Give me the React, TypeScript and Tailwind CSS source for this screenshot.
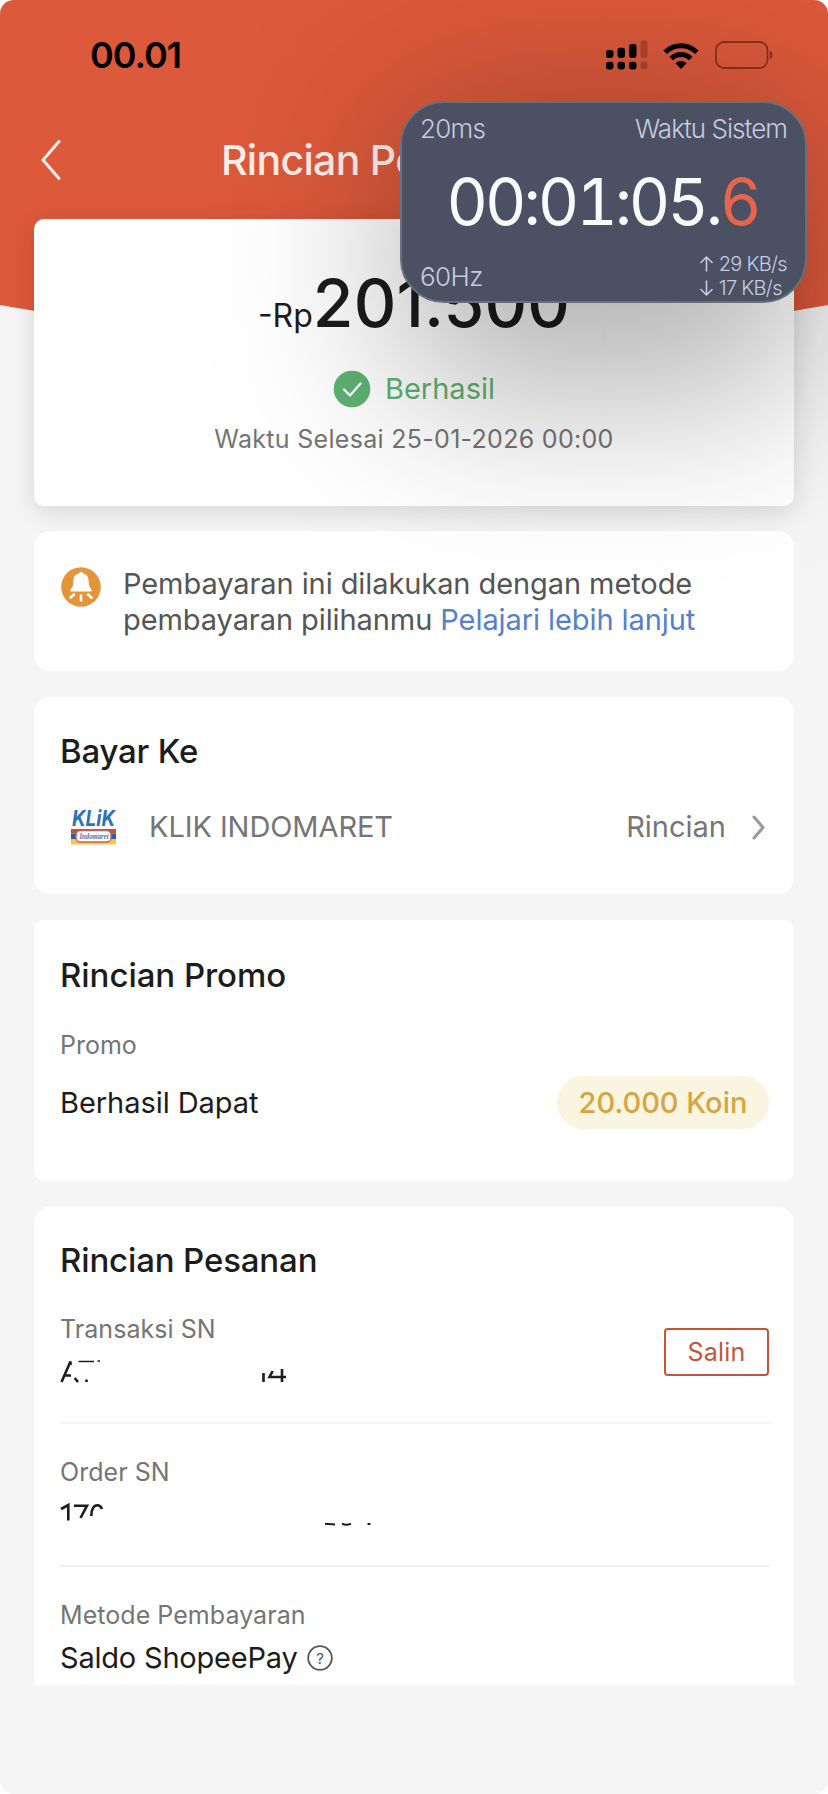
import React from "react";

function StatusIcons() {
  return (
    <div className="flex items-center">
      <svg width="42" height="30" viewBox="0 0 42 30">
        <g fill="#000">
          <rect x="0" y="10" width="7.5" height="8" rx="2.4" />
          <rect x="11.5" y="7.700" width="7.500" height="10.300" rx="2.4" />
          <rect x="23" y="4" width="7.500" height="14" rx="2.4" />
          <rect x="0" y="21.700" width="7.500" height="7.800" rx="2.4" />
          <rect x="11.5" y="21.700" width="7.500" height="7.800" rx="2.4" />
          <rect x="23" y="21.700" width="7.500" height="7.800" rx="2.4" />
        </g>
        <g fill="#000" opacity="0.2">
          <rect x="34.5" y="0.500" width="7" height="17.500" rx="2.4" />
          <rect x="34.5" y="21.700" width="7" height="7.800" rx="2.4" />
        </g>
      </svg>
      <svg width="36" height="27" viewBox="0 0 36 27" className="ml-[15px]">
        <g fill="none" stroke="#000" strokeWidth="5">
          <path d="M2.2 10.2a22.4 22.4 0 0 1 31.6 0" />
          <path d="M8.2 16.6a13.8 13.8 0 0 1 19.6 0" />
        </g>
        <path d="M18 27l-5.6-5.8a8 8 0 0 1 11.2 0z" fill="#000" />
      </svg>
      <svg width="58" height="28" viewBox="0 0 58 28" className="ml-[16px]">
        <rect x="1" y="1" width="51.500" height="26" rx="8" fill="none" stroke="#8f3118" strokeWidth="1.8" />
        <path d="M54.8 9.5c3.400 1.400 3.400 7.600 0 9z" fill="#8f3118" />
      </svg>
    </div>
  );
}

function Arrow({ up }: { up?: boolean }) {
  return (
    <svg width="13" height="16" viewBox="0 0 13 16" className="mr-[6px]" fill="none" stroke="currentColor" strokeWidth="1.600" strokeLinecap="round" strokeLinejoin="round">
      {up ? <path d="M6.500 15V1M1 6.500L6.500 1L12 6.500" /> : <path d="M6.500 1v14M1 9.500L6.500 15L12 9.500" />}
    </svg>
  );
}

function SystemClock() {
  return (
    <>
      <div className="absolute left-[400px] top-[115px] h-[280px] w-[407px] rounded-[42px] bg-black/30 blur-[88px]" />
      <div className="absolute left-[400px] top-[101px] flex h-[202px] w-[407px] flex-col justify-between rounded-[44px] border-2 border-[#66707c] bg-[#4b5163] font-light text-[#c5cbe0]">
        <div className="flex justify-between px-[18px] pt-[9px] text-[26px] leading-[34px]">
          <span className="tracking-[-0.7px]">20ms</span>
          <span className="tracking-[-0.95px]">Waktu Sistem</span>
        </div>
        <div className="mt-[6px] flex justify-center pr-[2px] text-[64px] font-normal leading-[60px] tracking-[-3px] text-[#f7faff] tabular-nums">
          <span>00:01:05.</span>
          <span className="text-[#e8654c]">6</span>
        </div>
        <div className="flex items-end justify-between px-[18px]">
          <span className="pb-[7px] text-[26px] leading-[34px] tracking-[-0.6px]">60Hz</span>
          <div className="flex flex-col pb-[1px] text-[20px] leading-[24px] tracking-[-0.7px]">
            <span className="flex items-center"><Arrow up />29 KB/s</span>
            <span className="flex items-center"><Arrow />17 KB/s</span>
          </div>
        </div>
      </div>
    </>
  );
}

function BellIcon() {
  return (
    <svg width="40" height="40" viewBox="0 0 40 40" className="mt-[1px] shrink-0">
      <circle cx="20" cy="20" r="19.800" fill="#e3953a" />
      <path d="M20 5c1.200 0 2 .6 2.300 1.500c3.600.9 5 3.600 5.300 7l.3 4.200c.2 2.400 1.700 3.300 2.600 5c.4.900 0 1.800-.9 1.800H10.400c-.9 0-1.300-.9-.9-1.800c.9-1.700 2.400-2.600 2.600-5l.3-4.200c.3-3.400 1.700-6.100 5.300-7C18 5.600 18.800 5 20 5z" fill="#fff" />
      <g stroke="#fff" strokeWidth="2.600"><path d="M20 27.500v7M13.700 26.800l-5 4.600M26.300 26.800l5 4.600" /></g>
    </svg>
  );
}

function KlikLogo() {
  return (
    <svg width="46" height="36" viewBox="0 0 46 36" className="overflow-visible">
      <text x="1" y="17" fontSize="21.500" fontWeight="700" fontStyle="italic" textLength="43" lengthAdjust="spacingAndGlyphs" fill="#2c72b4" fontFamily="Inter, sans-serif">KLiK</text>
      <rect y="20" width="45" height="4.500" fill="#d2483f" />
      <rect y="24.500" width="45" height="6" fill="#2c5da6" />
      <rect y="30" width="45" height="5.500" fill="#f3c74f" />
      <rect x="5" y="21.500" width="35" height="11.500" rx="4.500" fill="#fff" stroke="#c9605c" strokeWidth="1.300" />
      <text x="8.500" y="30" fontSize="8" fontWeight="700" fontStyle="italic" textLength="29" lengthAdjust="spacingAndGlyphs" fill="#5a6b9c" fontFamily="Liberation Serif, serif">Indomaret</text>
    </svg>
  );
}

function Field({ label, children }: { label: string; children: React.ReactNode }) {
  return (
    <div className="flex flex-col">
      <span className="text-[25px] leading-[32px] tracking-[0.050px] text-[#757575]">{label}</span>
      <div className="mt-[11px] h-[32px] text-[29px] leading-[32px] tracking-[-0.200px] text-[#1c1c1c]">{children}</div>
    </div>
  );
}

export default function App() {
  return (
    <div className="bg-white font-[Inter,'Noto_Sans',sans-serif]">
      <div className="relative h-[1794px] w-[828px] overflow-hidden rounded-[14px] bg-[#f5f5f5]">
        <svg className="absolute left-0 top-0" width="828" height="330" viewBox="0 0 828 330">
          <path d="M0 0H828V305Q414 380 0 305Z" fill="#dc593b" />
        </svg>
        <div className="relative flex flex-col">
          <header className="flex h-[219px] flex-col">
            <div className="flex h-[110px] items-center justify-between pl-[90px] pr-[55px]">
              <span className="text-[36px] font-semibold tracking-[-1px] text-black">00.01</span>
              <StatusIcons />
            </div>
            <div className="flex h-[100px] items-center pl-[41px]">
              <svg width="20" height="40" viewBox="0 0 20 40" fill="none" stroke="#fdeee9" strokeWidth="3" strokeLinecap="round" strokeLinejoin="round"><path d="M18 1.500L2 20L18 38.500" /></svg>
              <h1 className="ml-[160px] mt-[2px] text-[41px] font-medium tracking-[-0.700px] text-[#fdeee9]">Rincian Pesanan</h1>
            </div>
          </header>

          <main className="flex flex-col px-[34px]">
            <section className="flex h-[287px] flex-col items-center rounded-[10px] bg-white pt-[42px] shadow-[0_6px_26px_rgba(0,0,0,0.12)]">
              <div className="flex items-baseline text-[#1c1c1c]">
                <span className="text-[32px]">-Rp</span>
                <span className="text-[66px] font-medium leading-[84px] tracking-[0.200px]">201.500</span>
              </div>
              <div className="mt-[25px] flex items-center">
                <svg width="38" height="38" viewBox="0 0 38 38"><circle cx="19" cy="19" r="18.300" fill="#5db373" /><path d="M11 19.500l6 6L27.500 13.500" fill="none" stroke="#fff" strokeWidth="2.400" strokeLinecap="round" strokeLinejoin="round" /></svg>
                <span className="ml-[14px] text-[29px] leading-[36px] text-[#5db373]">Berhasil</span>
              </div>
              <span className="mt-[15px] text-[25px] leading-[32px] tracking-[0.300px] text-[#757575]">Waktu Selesai 25-01-2026 00:00</span>
            </section>

            <section className="mt-[25px] flex h-[140px] rounded-[16px] bg-white pl-[27px] pt-[35px]">
              <BellIcon />
              <p className="ml-[22px] whitespace-nowrap text-[29px] leading-[36px] tracking-[-0.080px] text-[#555]">
                Pembayaran ini dilakukan dengan metode<br />
                pembayaran pilihanmu <a className="text-[#5580cc]">Pelajari lebih lanjut</a>
              </p>
            </section>

            <section className="mt-[26px] flex h-[197px] flex-col rounded-[16px] bg-white pl-[26px] pr-[29px] pt-[33px]">
              <h2 className="text-[33px] font-medium leading-[42px] tracking-[-0.200px] text-[#1c1c1c]">Bayar Ke</h2>
              <div className="mt-[33px] flex h-[44px] items-center pl-[11px] text-[29px] text-[#757575]">
                <KlikLogo />
                <span className="ml-[32px] tracking-[-0.080px]">KLIK INDOMARET</span>
                <span className="ml-auto">Rincian</span>
                <svg className="ml-[26px]" width="13" height="25" viewBox="0 0 13 25" fill="none" stroke="#999" strokeWidth="3" strokeLinecap="round" strokeLinejoin="round"><path d="M2 2L11 12.500L2 23" /></svg>
              </div>
            </section>

            <section className="mt-[26px] flex h-[261px] flex-col rounded-[10px] bg-white pl-[26px] pr-[25px] pt-[34px]">
              <h2 className="text-[33px] font-medium leading-[42px] tracking-[-0.050px] text-[#1c1c1c]">Rincian Promo</h2>
              <span className="mt-[33px] text-[25px] leading-[32px] text-[#757575]">Promo</span>
              <div className="mt-[15px] flex h-[53px] items-center justify-between">
                <span className="text-[29px] tracking-[-0.050px] text-[#1c1c1c]">Berhasil Dapat</span>
                <span className="flex h-[53px] w-[212px] items-center justify-center rounded-full bg-[#faf4e1] text-[29px] font-medium text-[#d5a63f]">20.000 Koin</span>
              </div>
            </section>

            <section className="mt-[26px] flex h-[478px] flex-col rounded-t-[16px] bg-white pl-[26px] pr-[24px] pt-[32px]">
              <h2 className="text-[33px] font-medium leading-[42px] tracking-[-0.150px] text-[#1c1c1c]">Rincian Pesanan</h2>
              <div className="mt-[32px] flex h-[111px] justify-between border-b-2 border-[#f5f5f5]">
                <Field label="Transaksi SN">
                  <svg width="228" height="32" viewBox="0 0 228 32" fill="none" stroke="#1c1c1c" strokeWidth="2.600">
                    <path d="M1.500 26L10.500 5.500V9M4 19.500H11M14.700 22L18 26M26.500 23.500V26M203.500 17V26M222 13V26M212.700 15L209.500 21H226" />
                    <path d="M18.500 5.500H34M37.500 5H40" strokeWidth="1.500" />
                  </svg>
                </Field>
                <button className="mr-[1px] mt-[15px] h-[48px] w-[105px] rounded-[4px] border-2 border-[#c4553c] pt-[1px] text-[25px] tracking-[0.200px] text-[#c4553c]">Salin</button>
              </div>
              <div className="flex h-[143px] border-b-2 border-[#f1f1f1] pt-[32px]">
                <Field label="Order SN">
                  <svg width="320" height="32" viewBox="0 0 320 32" fill="none" stroke="#1c1c1c" strokeWidth="2.600">
                    <path d="M1 10L8.300 6V21.500M14 6.700H27L20.500 19M31.300 17C31.300 9.500 34 6.300 37.500 6.300C39.500 6.300 41 7.500 42 10" />
                    <path d="M265 24.800L275 25.500M282 24.700Q286.500 27 291 24.700M307.500 25H310.500" strokeWidth="2" />
                  </svg>
                </Field>
              </div>
              <div className="pt-[32px]">
                <Field label="Metode Pembayaran">
                  <span className="flex items-center">Saldo ShopeePay
                    <svg className="ml-[9px]" width="26" height="26" viewBox="0 0 26 26"><circle cx="13" cy="13" r="11.800" fill="none" stroke="#555" strokeWidth="1.800" /><text x="13" y="18.500" textAnchor="middle" fontSize="15" fill="#555">?</text></svg>
                  </span>
                </Field>
              </div>
            </section>
          </main>
        </div>
        <SystemClock />
      </div>
    </div>
  );
}
